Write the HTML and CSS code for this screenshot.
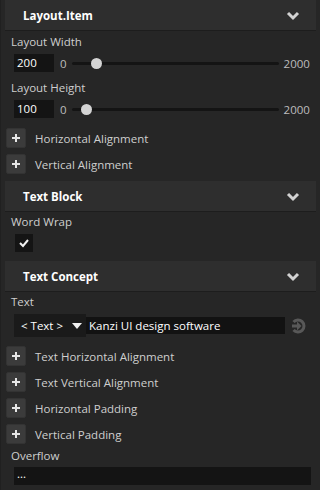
FILE: index.html
```html
<!DOCTYPE html>
<html lang="en">

<head>
    <meta charset="UTF-8">
    <meta name="viewport" content="width=device-width, initial-scale=1.0">
    <title>Properties</title>
    <link rel="stylesheet" href="styles.css">
</head>

<body>
    <div class="panel">
        <div class="section-header">
            <span>Layout.Item</span>
            <svg class="chevron" width="14" height="10" viewBox="0 0 14 10"><path d="M2 2 L7 7 L12 2" fill="none" stroke="#d2d2d2" stroke-width="3"/></svg>
        </div>

        <div class="prop">
            <div class="label">Layout Width</div>
            <div class="slider-row">
                <div class="value-box">200</div>
                <span class="range-min">0</span>
                <div class="track"><div class="thumb" style="left: 12%"></div></div>
                <span class="range-max">2000</span>
            </div>
        </div>

        <div class="prop">
            <div class="label">Layout Height</div>
            <div class="slider-row">
                <div class="value-box">100</div>
                <span class="range-min">0</span>
                <div class="track"><div class="thumb" style="left: 6.8%"></div></div>
                <span class="range-max">2000</span>
            </div>
        </div>

        <div class="add-list first">
            <div class="add-row"><span class="plus"></span>Horizontal Alignment</div>
            <div class="add-row"><span class="plus"></span>Vertical Alignment</div>
        </div>

        <div class="section-header">
            <span>Text Block</span>
            <svg class="chevron" width="14" height="10" viewBox="0 0 14 10"><path d="M2 2 L7 7 L12 2" fill="none" stroke="#d2d2d2" stroke-width="3"/></svg>
        </div>

        <div class="label">Word Wrap</div>
        <div class="checkbox">
            <svg width="12" height="10" viewBox="0 0 12 10"><path d="M2 5 L5 8 L10 2" fill="none" stroke="#f0f0f0" stroke-width="2"/></svg>
        </div>

        <div class="section-header">
            <span>Text Concept</span>
            <svg class="chevron" width="14" height="10" viewBox="0 0 14 10"><path d="M2 2 L7 7 L12 2" fill="none" stroke="#d2d2d2" stroke-width="3"/></svg>
        </div>

        <div class="label">Text</div>
        <div class="text-row">
            <div class="dropdown">
                <span>&lt; Text &gt;</span>
                <svg width="10" height="6" viewBox="0 0 10 6"><path d="M0 0 L10 0 L5 6 Z" fill="#f0f0f0"/></svg>
            </div>
            <div class="text-input">Kanzi UI design software</div>
            <svg class="go" width="16" height="16" viewBox="0 0 16 16">
                <path d="M3.5 4 A6 6 0 1 1 3.5 12" fill="none" stroke="#585858" stroke-width="3"/>
                <path d="M2 8 H8" stroke="#585858" stroke-width="3"/>
                <path d="M7 3.5 L11.5 8 L7 12.5 Z" fill="#585858"/>
            </svg>
        </div>

        <div class="add-list last">
            <div class="add-row"><span class="plus"></span>Text Horizontal Alignment</div>
            <div class="add-row"><span class="plus"></span>Text Vertical Alignment</div>
            <div class="add-row"><span class="plus"></span>Horizontal Padding</div>
            <div class="add-row"><span class="plus"></span>Vertical Padding</div>
        </div>

        <div class="label">Overflow</div>
        <div class="overflow-box">...</div>
    </div>
</body>

</html>
```

FILE: styles.css
```css
body {
    margin: 0;
    padding: 0;
    background-color: #262626;
    color: #cfcfcf;
    font-family: "Open Sans", "Noto Sans", sans-serif;
    font-size: 11.5px;
}

.panel {
    width: 320px;
    height: 490px;
    overflow: hidden;
    background-color: #262626;
    border-left: 1px solid #202020;
    box-sizing: border-box;
}

.section-header {
    display: flex;
    align-items: center;
    justify-content: space-between;
    height: 30px;
    margin: 0 4px 0 4px;
    padding: 0 16px 0 18px;
    background-color: #2e2e2e;
    border-bottom: 1px solid #1d1d1d;
    color: #ffffff;
    font-weight: bold;
    font-size: 11.5px;
}

.chevron {
    display: block;
    margin-top: 1px;
}

.label {
    height: 20px;
    line-height: 20px;
    padding-left: 10px;
}

.prop {
    margin-top: 1px;
    margin-bottom: 6px;
}

.prop + .prop {
    margin-top: 0;
}

.slider-row {
    display: flex;
    align-items: center;
    height: 18px;
    margin-top: 2px;
    padding-left: 13px;
}

.value-box {
    width: 37px;
    height: 18px;
    line-height: 18px;
    padding-left: 3px;
    background-color: #141414;
    color: #ffffff;
}

.range-min {
    margin-left: 6px;
    color: #bdbdbd;
}

.range-max {
    margin-left: 5px;
    color: #bdbdbd;
}

.track {
    position: relative;
    width: 207px;
    height: 3px;
    margin-left: 5px;
    border-radius: 2px;
    background-color: #141414;
}

.thumb {
    position: absolute;
    top: -4px;
    width: 11px;
    height: 11px;
    margin-left: -5px;
    border-radius: 50%;
    background-color: #d4d4d4;
}

.add-list {
    display: flex;
    flex-direction: column;
    gap: 6px;
    margin-top: 9px;
    margin-bottom: 7px;
}

.add-list.first {
    margin-top: 10px;
}

.add-list.last {
    margin-bottom: 2px;
}

.add-row {
    display: flex;
    align-items: center;
    height: 20px;
    padding-left: 5px;
}

.plus {
    position: relative;
    width: 20px;
    height: 20px;
    margin-right: 9px;
    border-radius: 2px;
    background-color: #3b3b3b;
    border: 1px solid #333;
    box-sizing: border-box;
}

.plus::before,
.plus::after {
    content: "";
    position: absolute;
    background-color: #e6e6e6;
}

.plus::before {
    left: 5px;
    top: 8px;
    width: 8px;
    height: 2px;
}

.plus::after {
    left: 8px;
    top: 5px;
    width: 2px;
    height: 8px;
}

.checkbox {
    display: flex;
    align-items: center;
    justify-content: center;
    width: 18px;
    height: 18px;
    margin: 2px 0 9px 14px;
    background-color: #141414;
}

.text-row {
    display: flex;
    align-items: center;
    height: 23px;
    margin-top: 2px;
    padding-left: 13px;
}

.dropdown {
    display: flex;
    align-items: center;
    justify-content: space-between;
    width: 72px;
    height: 23px;
    padding: 0 4px 0 7px;
    box-sizing: border-box;
    background-color: #1a1a1a;
    color: #ffffff;
}

.text-input {
    width: 196px;
    height: 17px;
    line-height: 17px;
    padding-left: 3px;
    background-color: #121212;
    color: #ffffff;
}

.go {
    margin-left: 5px;
}

.overflow-box {
    height: 18px;
    line-height: 14px;
    margin: 1px 9px 0 13px;
    padding-left: 3px;
    background-color: #141414;
    color: #ffffff;
}
```
